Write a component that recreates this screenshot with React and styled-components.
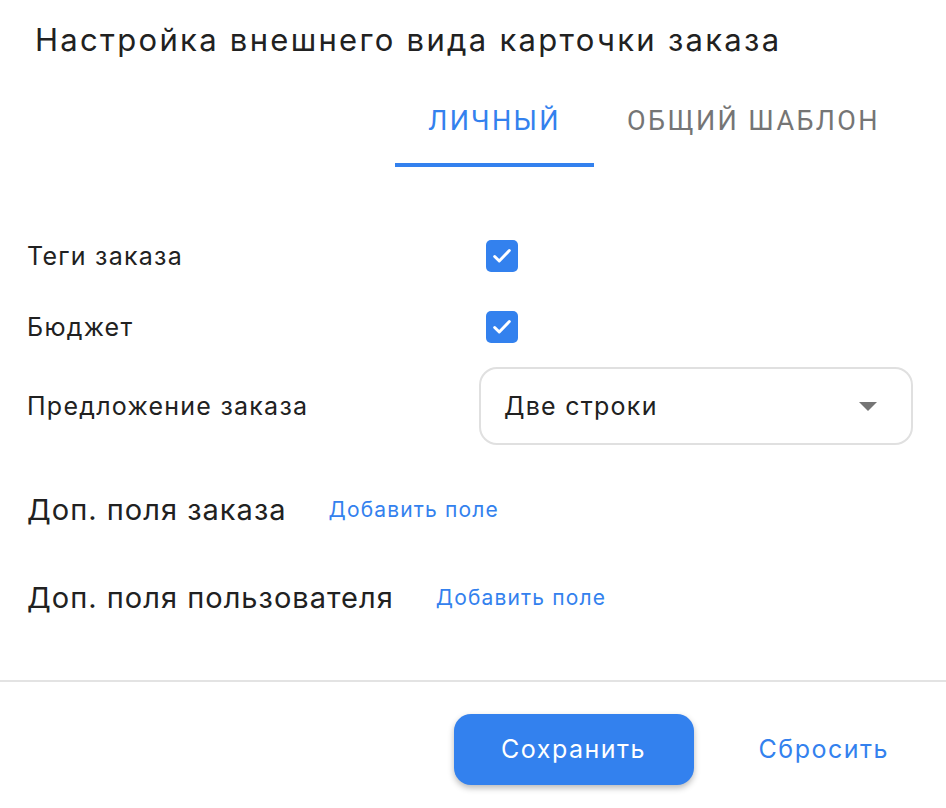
import React, { useState } from 'react'
import styled, { createGlobalStyle } from 'styled-components'

const Global = createGlobalStyle`
  body {
    margin: 0;
    background: #fff;
    font-family: Inter, "Noto Sans", sans-serif;
    color: #212121;
  }
`

const Dialog = styled.div`
  width: 946px;
  height: 808px;
  display: flex;
  flex-direction: column;
  background: #fff;
`

const Title = styled.h2`
  margin: 0;
  padding: 19px 0 0 35px;
  font-size: 31px;
  font-weight: 400;
  letter-spacing: 0.074em;
  line-height: 41px;
  color: #212121;
`

const Tabs = styled.div`
  display: flex;
  justify-content: flex-end;
  padding: 27px 33px 0 0;
`

const Tab = styled.button`
  box-sizing: border-box;
  height: 80px;
  border: none;
  background: none;
  padding: 0 33px 8px;
  font-family: Roboto, sans-serif;
  font-size: 27px;
  letter-spacing: 2.4px;
  text-transform: uppercase;
  color: ${p => (p.active ? '#3381ee' : '#757575')};
  border-bottom: 4px solid ${p => (p.active ? '#3381ee' : 'transparent')};
  cursor: pointer;
`

const Body = styled.div`
  flex: 1;
  padding: 53px 33px 0 27px;
  display: flex;
  flex-direction: column;
`

const Row = styled.div`
  display: grid;
  grid-template-columns: 452px 1fr;
  align-items: center;
  height: ${p => p.h || 71}px;
`

const Label = styled.div`
  font-size: 25px;
  letter-spacing: 0.05em;
  color: #212121;
`

const Check = styled.label`
  width: 32px;
  height: 32px;
  margin-left: 7px;
  border-radius: 5px;
  background: #3381ee;
  display: flex;
  align-items: center;
  justify-content: center;
  cursor: pointer;
`

const Select = styled.div`
  height: 78px;
  box-sizing: border-box;
  border: 2px solid #e0e0e0;
  border-radius: 18px;
  display: flex;
  align-items: center;
  justify-content: space-between;
  padding: 0 34px 0 23px;
  font-size: 25px;
  letter-spacing: 0.05em;
  color: #212121;
`

const Caret = styled.span`
  width: 0;
  height: 0;
  border-left: 9px solid transparent;
  border-right: 9px solid transparent;
  border-top: 9px solid #757575;
`

const Extras = styled.div`
  margin-top: 15px;
  display: flex;
  flex-direction: column;
`

const Extra = styled.div`
  display: flex;
  align-items: center;
  gap: 42px;
  height: 88px;
`

const ExtraTitle = styled.div`
  font-size: 29px;
  letter-spacing: 0.035em;
  color: #212121;
`

const AddLink = styled.a`
  font-size: 21px;
  letter-spacing: 0.055em;
  color: #3381ee;
  cursor: pointer;
`

const Footer = styled.div`
  border-top: 2px solid #e3e3e3;
  height: 128px;
  box-sizing: border-box;
  display: flex;
  align-items: center;
  justify-content: flex-end;
  gap: 65px;
  padding: 8px 57px 0 0;
`

const Primary = styled.button`
  width: 240px;
  height: 71px;
  border: none;
  border-radius: 17px;
  background: #3381ee;
  color: #fff;
  font-family: Inter, sans-serif;
  font-size: 25px;
  letter-spacing: 0.06em;
  box-shadow: 0 3px 6px rgba(0, 0, 0, 0.28);
  cursor: pointer;
`

const TextButton = styled.button`
  border: none;
  background: none;
  padding: 0;
  color: #3381ee;
  font-family: Inter, sans-serif;
  font-size: 25px;
  letter-spacing: 0.06em;
  cursor: pointer;
`

const Tick = () => (
  <svg width="22" height="22" viewBox="0 0 24 24">
    <path d="M4 12.5l5 5L20 6" fill="none" stroke="#fff" strokeWidth="3.2" strokeLinecap="round" strokeLinejoin="round" />
  </svg>
)

const App = () => {
  const [tab, setTab] = useState(0)
  return (
    <Dialog>
      <Global />
      <Title>Настройка внешнего вида карточки заказа</Title>
      <Tabs>
        <Tab active={tab === 0} onClick={() => setTab(0)}>Личный</Tab>
        <Tab active={tab === 1} onClick={() => setTab(1)}>Общий шаблон</Tab>
      </Tabs>
      <Body>
        <Row>
          <Label>Теги заказа</Label>
          <Check><Tick /></Check>
        </Row>
        <Row>
          <Label>Бюджет</Label>
          <Check><Tick /></Check>
        </Row>
        <Row h={88}>
          <Label>Предложение заказа</Label>
          <Select>
            Две строки
            <Caret />
          </Select>
        </Row>
        <Extras>
          <Extra>
            <ExtraTitle>Доп. поля заказа</ExtraTitle>
            <AddLink>Добавить поле</AddLink>
          </Extra>
          <Extra>
            <ExtraTitle>Доп. поля пользователя</ExtraTitle>
            <AddLink>Добавить поле</AddLink>
          </Extra>
        </Extras>
      </Body>
      <Footer>
        <Primary>Сохранить</Primary>
        <TextButton>Сбросить</TextButton>
      </Footer>
    </Dialog>
  )
}

export default App
